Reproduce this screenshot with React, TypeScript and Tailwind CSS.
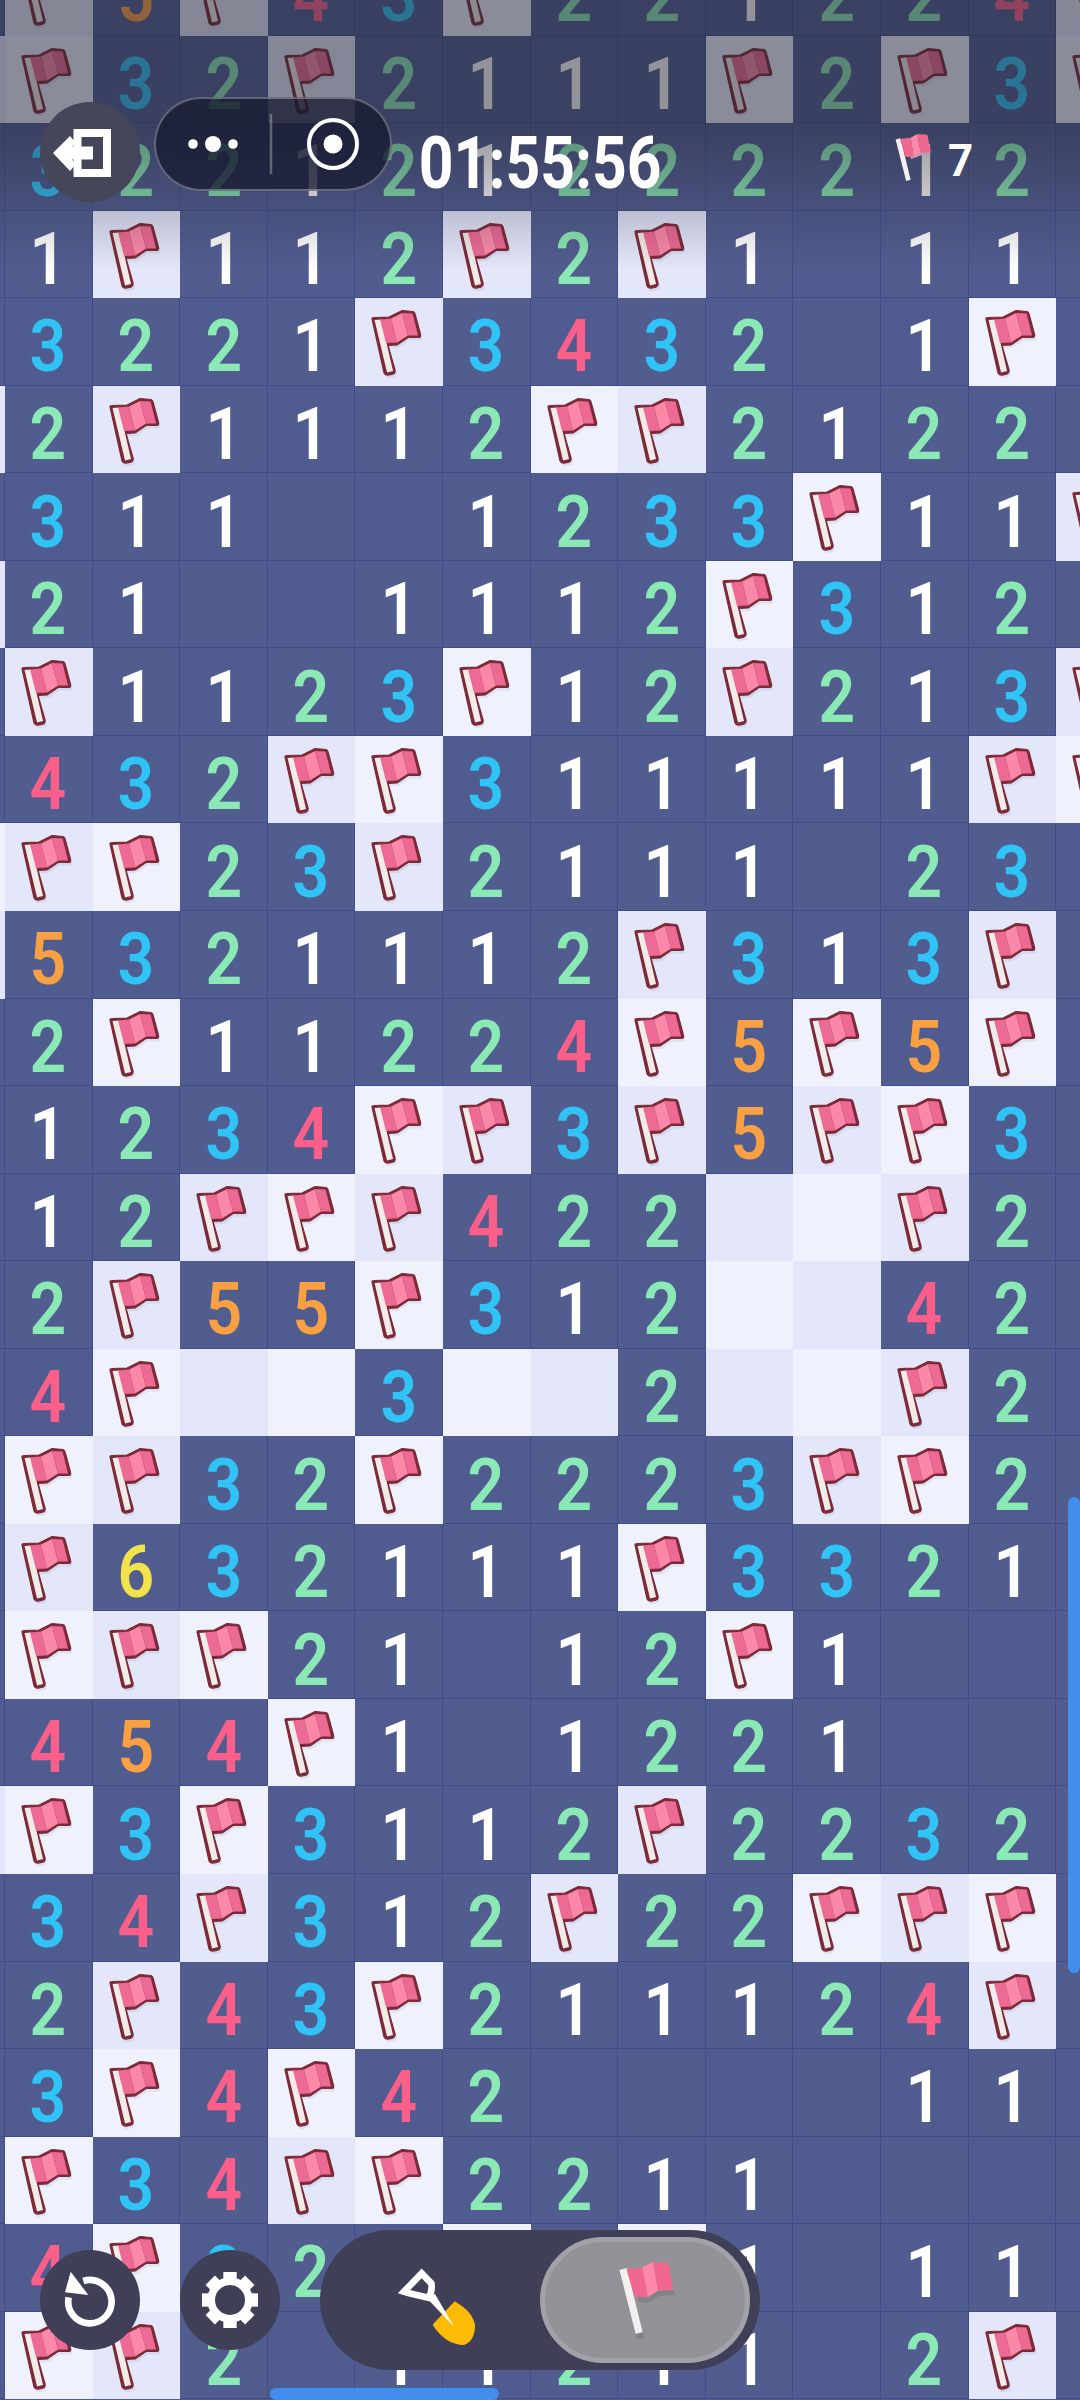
import React from "react";

const BOARD = [
  "_F5F43F221224F",
  "FF32F2111F2F3F",
  "_322121222212_",
  "_1F112F2F1_11_",
  "_3221F3432_1F_",
  "F2F1112FF2122_",
  "_311__1233F11F",
  "F21__1112F312_",
  "_F1123F12F213F",
  "_432FF311111FF",
  "FFF23F2111_23_",
  "F5321112F313F_",
  "_2F11224F5F5F_",
  "_1234FF3F5FF3_",
  "_12FFF422UUF2_",
  "_2F55F312UU42_",
  "_4FUU3UU2UUF2_",
  "_FF32F2223FF2_",
  "_F632111F3321_",
  "_FFF21_12F1___",
  "_454F1_1221___",
  "FF3F3112F2232_",
  "_34F312F22FFF_",
  "_2F43F211124F_",
  "_3F4F42____11_",
  "_F34FF2211____",
  "_4F32_F_F1_11_",
  "_FF2_11211_2F_",
];

const DIGIT: Record<string, string> = {
  "1": "text-white",
  "2": "text-[#8be9b5]",
  "3": "text-[#30c3f5]",
  "4": "text-[#f95f89]",
  "5": "text-[#f9a043]",
  "6": "text-[#f2e34b]",
};

const OUTLINE =
  "M17 21 Q16.5 19.5 19 19.5 L34 19 L47 12.5 L58 13.5 Q59.5 14 60 16 L65.5 36.5 Q66 39 64 39.5 L53 39.5 L42 47 L33 47.5 L40 72 Q40.5 75 38 76 L33 77 Q30 77.5 29 75 Z";

function CellFlag() {
  return (
    <svg viewBox="0 0 87.5 87.5" className="block h-full w-full">
      <path d={OUTLINE} fill="#4b5a99" opacity="0.1" transform="translate(1.5 3)" />
      <path d={OUTLINE} fill="#7c2a36" stroke="#7c2a36" strokeWidth="1.2" strokeLinejoin="round" />
      <polygon points="19.5,22 26,21.5 38,73 32,74.5" fill="#f1ebea" />
      <polygon points="25,21.5 36,20.5 42,44.5 31,45" fill="#ec6a93" />
      <polygon points="36,20.5 47,15 53,37.5 42,44.5" fill="#fb88a9" />
      <polygon points="47,15 57.5,15.5 63,37.5 53,37.5" fill="#ec6a93" />
    </svg>
  );
}

function PlainFlag({ className, shadow }: { className: string; shadow?: boolean }) {
  return (
    <svg viewBox="0 0 56 80" className={className}>
      {shadow ? (
        <g fill="#000" opacity="0.1">
          <polygon points="16.7,74 23.6,72 25,79 18,79" />
          <polygon points="18,36.7 28.7,37.3 39,30.7 54.6,30 55.6,35 40,36 29,43 20,42" />
        </g>
      ) : null}
      <polygon points="0.5,10 8,8 23.6,72 16.7,74" fill="#f3f0f2" />
      <polygon points="7.4,9.3 23.6,7.3 28.7,37.3 15.7,36.7" fill="#f0678f" />
      <polygon points="23.6,7.3 34,1.7 39,30.7 28.7,37.3" fill="#fd88aa" />
      <polygon points="34,1.7 49.4,2.7 54.6,30 39,30.7" fill="#f0678f" />
    </svg>
  );
}

function Cell({ ch, even }: { ch: string; even: boolean }) {
  if (ch === "F" || ch === "U") {
    return (
      <div className={even ? "bg-[#e3e7f9]" : "bg-[#eff1fd]"}>{ch === "F" ? <CellFlag /> : null}</div>
    );
  }
  return (
    <div
      className={`flex items-center justify-center border-r border-b border-[#3f4d8d] pt-[11px] font-semibold leading-none ${
        even ? "bg-[#505c8f]" : "bg-[#515d8f]"
      } ${DIGIT[ch] ?? ""}`}
    >
      {ch === "_" ? null : <span className="inline-block scale-x-[0.88]">{ch}</span>}
    </div>
  );
}

export default function App() {
  return (
    <div className="relative h-[2400px] w-[1080px] overflow-hidden bg-[#505c8f] font-['Roboto',sans-serif]">
      <div className="-mt-[52px] -ml-[82.6px] grid w-[1226.4px] grid-cols-[repeat(14,87.6px)] auto-rows-[87.55px] text-[73px]">
        {BOARD.flatMap((row, r) =>
          row.split("").map((ch, c) => <Cell key={`${r}-${c}`} ch={ch} even={(r + c) % 2 === 1} />)
        )}
      </div>

      {/* top shade */}
      <div className="absolute inset-x-0 top-0 h-[270px] bg-[linear-gradient(to_bottom,rgba(35,35,50,0.49)_0,rgba(35,35,50,0.49)_125px,rgba(35,35,50,0)_270px)]" />

      {/* top bar, floating over the board */}
      <div className="absolute inset-x-0 top-[102px] flex h-[100px] items-center pl-[40px]">
        <div className="h-[100px] w-[100px] shrink-0 rounded-full bg-[#45465a]">
          <svg viewBox="0 0 100 100" className="h-[100px] w-[100px]">
            <path d="M37.5 45 V31 H67 V71 H37.5 V57" fill="none" stroke="#fff" strokeWidth="8" />
            <path d="M53 51 H22" fill="none" stroke="#fff" strokeWidth="13" />
            <path d="M13 51 L30 34 L36 41 L26 51 L36 62 L30 69 Z" fill="#fff" />
          </svg>
        </div>

        <div className="-mt-[16px] ml-[14px] h-[94px] w-[238px] shrink-0 rounded-full border-2 border-white/30 bg-[#16182f]/75">
          <svg viewBox="0 0 234 90" className="h-[90px] w-[234px]">
            <circle cx="37" cy="45" r="4.8" fill="#fff" />
            <circle cx="57" cy="45" r="8" fill="#fff" />
            <circle cx="77" cy="45" r="4.8" fill="#fff" />
            <line x1="115" y1="15" x2="115" y2="75" stroke="#fff" strokeOpacity="0.3" strokeWidth="2.5" />
            <circle cx="177" cy="45" r="24" fill="none" stroke="#fff" strokeWidth="4" />
            <circle cx="177" cy="45" r="9.5" fill="#fff" />
          </svg>
        </div>

        <div className="mt-[22px] ml-[28px] flex w-[240px] shrink-0 justify-center text-[73px] leading-none font-bold whitespace-nowrap text-white">
          <span className="inline-block scale-x-[0.83]">01:55:56</span>
        </div>

        <PlainFlag className="mt-[14px] ml-[235px] h-[52px] w-[37px] shrink-0" />
        <span className="mt-[18px] ml-[16px] text-[44px] leading-[48px] font-bold text-white">7</span>
      </div>

      {/* bottom actions, floating over the board */}
      <div className="absolute top-[2230px] left-[40px] flex h-[140px] items-center gap-[40px]">
        <div className="h-[100px] w-[100px] rounded-full bg-[#3f3f57]">
          <svg viewBox="0 0 300 300" className="h-[100px] w-[100px]">
            <path d="M86 142 A65 65 0 1 0 130 93" fill="none" stroke="#fff" strokeWidth="20" />
            <polygon points="92,65 75,127 145,135" fill="#fff" />
          </svg>
        </div>
        <div className="h-[100px] w-[100px] rounded-full bg-[#3f3f57]">
          <svg viewBox="-150 -150 300 300" className="h-[100px] w-[100px]">
            <circle r="56.5" fill="none" stroke="#fff" strokeWidth="23" />
            {[0, 45, 90, 135, 180, 225, 270, 315].map((a) => (
              <rect key={a} x="-20" y="-84" width="40" height="32" fill="#fff" transform={`rotate(${a})`} />
            ))}
          </svg>
        </div>

        <div className="flex h-[140px] w-[440px] items-center rounded-full bg-[#3f3f57] pr-[10px] pl-[70px]">
          <svg viewBox="0 0 300 300" className="h-[100px] w-[100px] shrink-0">
            <path
              d="M134 225 L195 160 Q243 188 250 225 Q250 268 222 280 Q172 280 134 225 Z"
              fill="#fdbb05"
              stroke="#fdbb05"
              strokeWidth="10"
              strokeLinejoin="round"
            />
            <path d="M108 142 L135 132 L192 230 Z" fill="#fff" />
            <path
              d="M42 125 L95 70 L124 100 Q128 125 115 143 L58 130 Z"
              fill="none"
              stroke="#fff"
              strokeWidth="20"
              strokeLinejoin="miter"
            />
          </svg>
          <div className="ml-auto flex h-[126px] w-[210px] items-center justify-center rounded-full border-[5px] border-[#a2a1a8] bg-[#939298]">
            <PlainFlag shadow className="mt-[0px] ml-[4px] h-[80px] w-[56px]" />
          </div>
        </div>
      </div>

      {/* scroll indicators */}
      <div className="absolute top-[1497px] right-0 h-[476px] w-[12px] rounded-[6px] bg-[#438eec]" />
      <div className="absolute top-[2388px] left-[270px] h-[12px] w-[229px] rounded-[6px] bg-[#438eec]" />
    </div>
  );
}
